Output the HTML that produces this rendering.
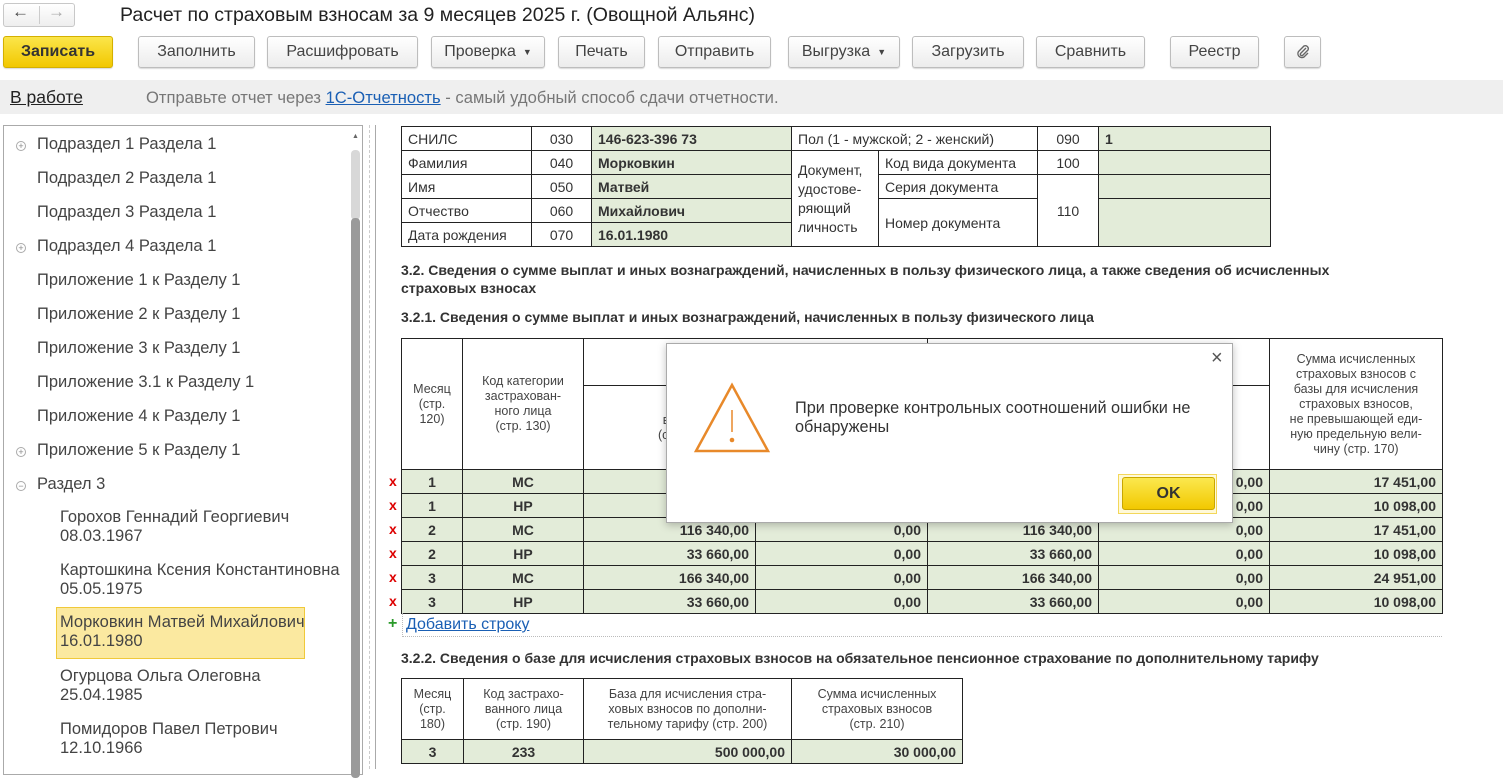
<!DOCTYPE html>
<html><head><meta charset="utf-8"><style>
*{box-sizing:border-box;margin:0;padding:0}
body{width:1503px;height:769px;overflow:hidden;background:#fff;font-family:"Liberation Sans",Arial,sans-serif;color:#333;position:relative;font-size:14px}
.a{position:absolute}
.btn{position:absolute;top:36px;height:32px;border:1px solid #bdbdbd;border-radius:3px;background:linear-gradient(#fff,#ececec);font-size:16px;color:#444;display:flex;align-items:center;justify-content:center;box-shadow:0 1px 1px rgba(0,0,0,.15)}
.ar{font-size:9px;margin-left:7px}
.li{position:absolute;font-size:16.5px;color:#444;white-space:nowrap}
.pl{position:absolute;width:10px;height:10px;border:1px solid #aaa;border-radius:50%;font-size:9px;line-height:8px;text-align:center;color:#888}
table{border-collapse:collapse;position:absolute;table-layout:fixed}
td{border:1px solid #222;font-size:14px;padding:0 6px;white-space:nowrap;overflow:hidden}
.g{background:#e3ecd9;font-weight:bold}
.c{text-align:center}.r{text-align:right}
.h td{font-size:12.5px;text-align:center;white-space:normal;line-height:15px;color:#444;padding:0 2px}
.x{position:absolute;left:389px;color:#d00;font-weight:bold;font-size:14px}
</style></head><body>
<div class="a" style="left:3px;top:3px;width:72px;height:24px;border:1px solid #c8c8c8;border-radius:3px;background:linear-gradient(#fff,#eee)"></div>
<div class="a" style="left:39px;top:6px;width:1px;height:18px;background:#ccc"></div>
<div class="a" style="left:12px;top:2px;font-size:17px;color:#444">&#8592;</div>
<div class="a" style="left:48px;top:2px;font-size:17px;color:#aaa">&#8594;</div>
<div class="a" style="left:120px;top:4px;font-size:19.5px;color:#222">Расчет по страховым взносам за 9 месяцев 2025 г. (Овощной Альянс)</div>
<div class="btn" style="left:3px;width:110px;background:linear-gradient(#fbe64a,#f2c800);border-color:#d4b000;font-weight:bold;color:#333">Записать</div>
<div class="btn" style="left:138px;width:117px">Заполнить</div>
<div class="btn" style="left:267px;width:151px">Расшифровать</div>
<div class="btn" style="left:431px;width:114px">Проверка<span class="ar">&#9660;</span></div>
<div class="btn" style="left:558px;width:87px">Печать</div>
<div class="btn" style="left:658px;width:113px">Отправить</div>
<div class="btn" style="left:788px;width:112px">Выгрузка<span class="ar">&#9660;</span></div>
<div class="btn" style="left:912px;width:112px">Загрузить</div>
<div class="btn" style="left:1036px;width:109px">Сравнить</div>
<div class="btn" style="left:1170px;width:89px">Реестр</div>
<div class="btn" style="left:1284px;width:37px"><svg width="16" height="16" viewBox="0 0 16 16"><path d="M11 4 L5.5 9.5 a1.5 1.5 0 0 0 2 2 L13 6 a3 3 0 0 0 -4 -4 L3.5 7.5 a4 4 0 0 0 5.5 5.5 L13 9" fill="none" stroke="#666" stroke-width="1.4"/></svg></div>
<div class="a" style="left:0;top:80px;width:1503px;height:34px;background:#efefef"></div>
<div class="a" style="left:10px;top:87px;font-size:17.5px;color:#222;text-decoration:underline">В работе</div>
<div class="a" style="left:146px;top:88px;font-size:16.6px;color:#777">Отправьте отчет через <span style="color:#1a5fb4;text-decoration:underline">1С-Отчетность</span> - самый удобный способ сдачи отчетности.</div>
<div class="a" style="left:3px;top:125px;width:360px;height:650px;border:1px solid #aaa"></div>
<div class="a" style="left:351px;top:150px;width:9px;height:70px;background:#d8d8d8;border-radius:4px"></div>
<div class="a" style="left:351px;top:218px;width:9px;height:560px;background:#9a9a9a;border-radius:4px"></div>
<div class="a" style="left:352px;top:133px;font-size:7px;color:#666">&#9650;</div>
<div class="pl" style="left:16px;top:141px">+</div>
<div class="li" style="left:37px;top:135px">Подраздел 1 Раздела 1</div>
<div class="li" style="left:37px;top:169px">Подраздел 2 Раздела 1</div>
<div class="li" style="left:37px;top:203px">Подраздел 3 Раздела 1</div>
<div class="pl" style="left:16px;top:243px">+</div>
<div class="li" style="left:37px;top:237px">Подраздел 4 Раздела 1</div>
<div class="li" style="left:37px;top:271px">Приложение 1 к Разделу 1</div>
<div class="li" style="left:37px;top:305px">Приложение 2 к Разделу 1</div>
<div class="li" style="left:37px;top:339px">Приложение 3 к Разделу 1</div>
<div class="li" style="left:37px;top:373px">Приложение 3.1 к Разделу 1</div>
<div class="li" style="left:37px;top:407px">Приложение 4 к Разделу 1</div>
<div class="pl" style="left:16px;top:447px">+</div>
<div class="li" style="left:37px;top:441px">Приложение 5 к Разделу 1</div>
<div class="pl" style="left:16px;top:481px">&#8722;</div>
<div class="li" style="left:37px;top:475px">Раздел 3</div>
<div class="a" style="left:56px;top:607px;width:249px;height:52px;background:#fbe9a0;border:1px solid #f0c93a"></div>
<div class="li" style="left:60px;top:508px;line-height:19px">Горохов Геннадий Георгиевич<br>08.03.1967</div>
<div class="li" style="left:60px;top:561px;line-height:19px">Картошкина Ксения Константиновна<br>05.05.1975</div>
<div class="li" style="left:60px;top:613px;line-height:19px">Морковкин Матвей Михайлович<br>16.01.1980</div>
<div class="li" style="left:60px;top:667px;line-height:19px">Огурцова Ольга Олеговна<br>25.04.1985</div>
<div class="li" style="left:60px;top:720px;line-height:19px">Помидоров Павел Петрович<br>12.10.1966</div>
<div class="a" style="left:369px;top:125px;width:0;height:644px;border-left:1px dashed #ccc"></div>
<div class="a" style="left:375px;top:125px;width:1px;height:644px;background:#aaa"></div>
<table style="left:401px;top:126px;width:869px">
<colgroup><col style="width:130px"><col style="width:60px"><col style="width:200px"><col style="width:87px"><col style="width:159px"><col style="width:61px"><col style="width:172px"></colgroup>
<tr style="height:24px"><td>СНИЛС</td><td class="c">030</td><td class="g">146-623-396 73</td><td colspan="2">Пол (1 - мужской; 2 - женский)</td><td class="c">090</td><td class="g">1</td></tr>
<tr style="height:24px"><td>Фамилия</td><td class="c">040</td><td class="g">Морковкин</td><td rowspan="4" style="white-space:normal;line-height:19px;vertical-align:middle">Документ, удостове-ряющий личность</td><td>Код вида документа</td><td class="c">100</td><td class="g"></td></tr>
<tr style="height:24px"><td>Имя</td><td class="c">050</td><td class="g">Матвей</td><td>Серия документа</td><td class="c" rowspan="3">110</td><td class="g"></td></tr>
<tr style="height:24px"><td>Отчество</td><td class="c">060</td><td class="g">Михайлович</td><td rowspan="2">Номер документа</td><td class="g" rowspan="2"></td></tr>
<tr style="height:24px"><td>Дата рождения</td><td class="c">070</td><td class="g">16.01.1980</td></tr>
</table>
<div class="a" style="left:401px;top:261px;font-size:14px;font-weight:bold;color:#333;line-height:18px;width:1000px">3.2. Сведения о сумме выплат и иных вознаграждений, начисленных в пользу физического лица, а также сведения об исчисленных<br>страховых взносах</div>
<div class="a" style="left:401px;top:309px;font-size:14px;font-weight:bold;color:#333">3.2.1. Сведения о сумме выплат и иных вознаграждений, начисленных в пользу физического лица</div>
<table style="left:401px;top:338px;width:1041px">
<colgroup><col style="width:61px"><col style="width:121px"><col style="width:172px"><col style="width:172px"><col style="width:171px"><col style="width:171px"><col style="width:173px"></colgroup>
<tr class="h" style="height:47px"><td rowspan="2">Месяц<br>(стр.<br>120)</td><td rowspan="2">Код категории<br>застрахован-<br>ного лица<br>(стр. 130)</td><td colspan="2">Сумма</td><td colspan="2"></td><td rowspan="2" style="padding:0 10px">Сумма исчисленных<br>страховых взносов с<br>базы для исчисления<br>страховых взносов,<br>не превышающей еди-<br>ную предельную вели-<br>чину (стр. 170)</td></tr>
<tr class="h" style="height:84px"><td>во<br>(стр</td><td></td><td></td><td>ым<br>0)</td></tr>
<tr style="height:24px"><td class="g c">1</td><td class="g c">МС</td><td class="g r"></td><td class="g r"></td><td class="g r"></td><td class="g r">0,00</td><td class="g r">17 451,00</td></tr>
<tr style="height:24px"><td class="g c">1</td><td class="g c">НР</td><td class="g r"></td><td class="g r"></td><td class="g r"></td><td class="g r">0,00</td><td class="g r">10 098,00</td></tr>
<tr style="height:24px"><td class="g c">2</td><td class="g c">МС</td><td class="g r">116 340,00</td><td class="g r">0,00</td><td class="g r">116 340,00</td><td class="g r">0,00</td><td class="g r">17 451,00</td></tr>
<tr style="height:24px"><td class="g c">2</td><td class="g c">НР</td><td class="g r">33 660,00</td><td class="g r">0,00</td><td class="g r">33 660,00</td><td class="g r">0,00</td><td class="g r">10 098,00</td></tr>
<tr style="height:24px"><td class="g c">3</td><td class="g c">МС</td><td class="g r">166 340,00</td><td class="g r">0,00</td><td class="g r">166 340,00</td><td class="g r">0,00</td><td class="g r">24 951,00</td></tr>
<tr style="height:24px"><td class="g c">3</td><td class="g c">НР</td><td class="g r">33 660,00</td><td class="g r">0,00</td><td class="g r">33 660,00</td><td class="g r">0,00</td><td class="g r">10 098,00</td></tr>
</table>
<div class="x" style="top:473px">x</div><div class="x" style="top:497px">x</div><div class="x" style="top:521px">x</div><div class="x" style="top:545px">x</div><div class="x" style="top:569px">x</div><div class="x" style="top:593px">x</div>
<div class="a" style="left:388px;top:615px;color:#2a9a2a;font-weight:bold;font-size:16px">+</div>
<div class="a" style="left:402px;top:613px;width:1040px;height:24px;border-bottom:1px dotted #bbb;border-left:1px dotted #bbb"></div>
<div class="a" style="left:406px;top:616px;font-size:16px;color:#1a5fb4;text-decoration:underline">Добавить строку</div>
<div class="a" style="left:401px;top:650px;font-size:14px;font-weight:bold;color:#333">3.2.2. Сведения о базе для исчисления страховых взносов на обязательное пенсионное страхование по дополнительному тарифу</div>
<table style="left:401px;top:678px;width:561px">
<colgroup><col style="width:62px"><col style="width:120px"><col style="width:208px"><col style="width:171px"></colgroup>
<tr class="h" style="height:61px"><td>Месяц<br>(стр.<br>180)</td><td>Код застрахо-<br>ванного лица<br>(стр. 190)</td><td>База для исчисления стра-<br>ховых взносов по дополни-<br>тельному тарифу (стр. 200)</td><td>Сумма исчисленных<br>страховых взносов<br>(стр. 210)</td></tr>
<tr style="height:24px"><td class="g c">3</td><td class="g c">233</td><td class="g r">500 000,00</td><td class="g r">30 000,00</td></tr>
</table>
<div class="a" style="left:666px;top:343px;width:567px;height:180px;background:#fff;border:1px solid #aaa;box-shadow:0 2px 8px rgba(0,0,0,.25)"></div>
<div class="a" style="left:1211px;top:347px;font-size:20px;color:#555">&#215;</div>
<svg class="a" style="left:693px;top:382px" width="78" height="72" viewBox="0 0 78 72"><path d="M39 3 L75 69 L3 69 Z" fill="none" stroke="#e8892a" stroke-width="2.5" stroke-linejoin="miter"/><line x1="39" y1="28" x2="39" y2="50" stroke="#e8892a" stroke-width="1.5"/><circle cx="39" cy="58" r="2.3" fill="#e8892a"/></svg>
<div class="a" style="left:795px;top:399px;font-size:16.3px;color:#333;line-height:19px">При проверке контрольных соотношений ошибки не<br>обнаружены</div>
<div class="a" style="left:1118px;top:474px;width:99px;height:40px;border:1px solid #f3d75a;background:#fff9d8"></div>
<div class="a" style="left:1122px;top:477px;width:93px;height:33px;border:1px solid #c9a600;border-radius:3px;background:linear-gradient(#fbe84e,#f2c800);font-weight:bold;font-size:16px;color:#333;display:flex;align-items:center;justify-content:center">OK</div>
</body></html>
